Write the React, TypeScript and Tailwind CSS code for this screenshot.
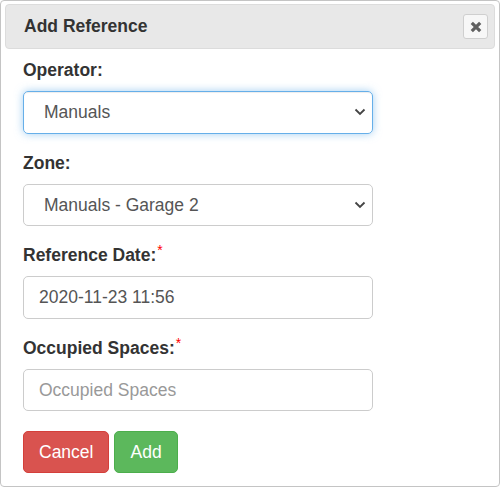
import React from "react";

function Chevron() {
  return (
    <svg width="12" height="8" viewBox="0 0 12 8" className="absolute right-[6px] top-1/2 -translate-y-1/2">
      <path d="M1.5 1.5 L6 6 L10.5 1.5" fill="none" stroke="#444" strokeWidth="1.8" />
    </svg>
  );
}

function Label({ text, req }: { text: string; req?: boolean }) {
  return (
    <div className="h-[25px] leading-[25px] mb-[8px] text-[17.5px] font-bold text-[#333]">
      {text}
      {req && <span className="text-[#f00] text-[14px] font-normal relative top-[-6px] ml-[1px]">*</span>}
    </div>
  );
}

export default function App() {
  return (
    <div
      className="w-[500px] h-[487px] bg-white border border-[#c4c4c4] rounded-[4px] pt-[3px] px-[4px]"
      style={{ fontFamily: '"Liberation Sans", Arial, sans-serif' }}
    >
      <div className="h-[45px] bg-[#e8e8e8] border border-[#dcdcdc] rounded-[4px] flex items-center justify-between pl-[18px] pr-[6px]">
        <div className="text-[17.5px] font-bold text-[#333]">Add Reference</div>
        <div className="w-[25px] h-[25px] bg-[#f7f7f7] border border-[#cfcfcf] rounded-[3px] flex items-center justify-center">
          <svg width="12" height="12" viewBox="0 0 12 12">
            <path d="M1.8 1.8 L10.2 10.2 M10.2 1.8 L1.8 10.2" stroke="#606060" strokeWidth="3.2" strokeLinecap="butt" />
          </svg>
        </div>
      </div>

      <div className="pl-[18px] pt-[9px]">
        <div className="mb-[17px]">
          <Label text="Operator:" />
          <div className="relative w-[350px] h-[42.5px] border border-[#66afe9] rounded-[5px] shadow-[inset_0_1px_1px_rgba(0,0,0,0.075),0_0_8px_rgba(102,175,233,0.6)] flex items-center pl-[20px] text-[17.5px] text-[#555]">
            Manuals
            <Chevron />
          </div>
        </div>

        <div className="mb-[17px]">
          <Label text="Zone:" />
          <div className="relative w-[350px] h-[42.5px] border border-[#ccc] rounded-[5px] flex items-center pl-[20px] text-[17.5px] text-[#555]">
            Manuals - Garage 2
            <Chevron />
          </div>
        </div>

        <div className="mb-[17px]">
          <Label text="Reference Date:" req />
          <div className="w-[350px] h-[42.5px] border border-[#ccc] rounded-[5px] flex items-center pl-[15px] text-[17.5px] text-[#555]">
            2020-11-23 11:56
          </div>
        </div>

        <div className="mb-[20px]">
          <Label text="Occupied Spaces:" req />
          <div className="w-[350px] h-[42.5px] border border-[#ccc] rounded-[5px] flex items-center pl-[15px] text-[17.5px] text-[#999]">
            Occupied Spaces
          </div>
        </div>

        <div className="flex gap-[5px]">
          <div className="h-[42px] px-[15px] bg-[#d9534f] border border-[#d43f3a] rounded-[5px] text-white text-[17.5px] flex items-center">
            Cancel
          </div>
          <div className="h-[42px] px-[15px] bg-[#5cb85c] border border-[#4cae4c] rounded-[5px] text-white text-[17.5px] flex items-center">
            Add
          </div>
        </div>
      </div>
    </div>
  );
}
